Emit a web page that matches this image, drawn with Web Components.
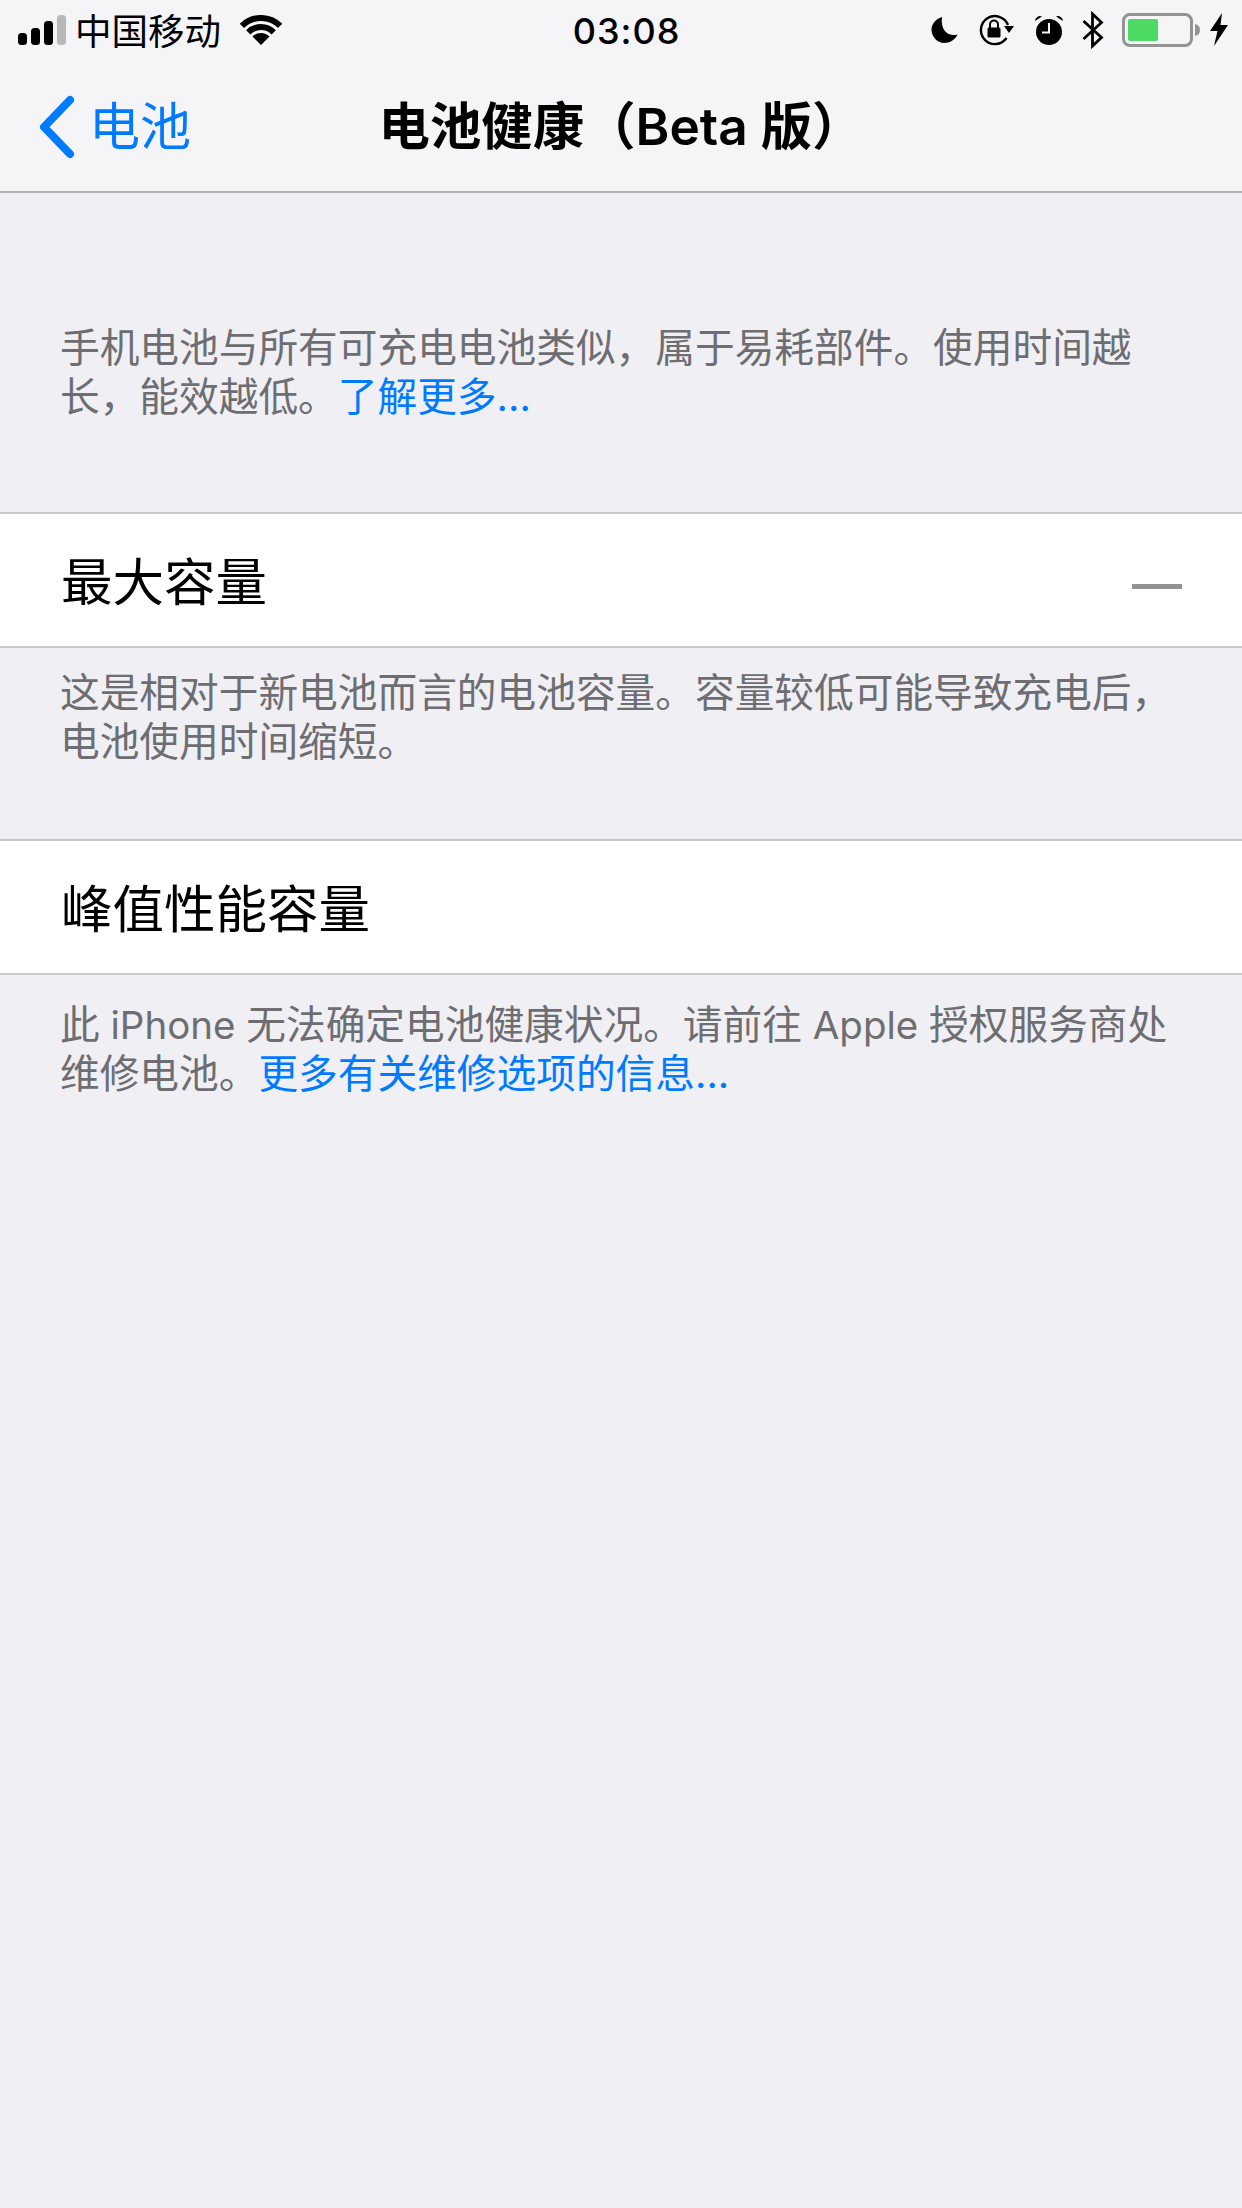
<!DOCTYPE html>
<html lang="zh">
<head>
<meta charset="utf-8">
<title>电池健康</title>
<style>
    html, body {
        margin: 0;
        padding: 0;
        background: #efeff4;
    }

    body {
        width: 1242px;
        height: 2208px;
        overflow: hidden;
        font-family: Inter, 'Noto Sans CJK SC', sans-serif;
    }
</style>
</head>
<body>
<battery-page>
    <status-bar slot="top"></status-bar>
    <nav-bar slot="top" back="电池">电池健康（Beta 版）</nav-bar>

    <group-note top="131" bottom="90">手机电池与所有可充电电池类似，属于易耗部件。使用时间越<br>长，能效越低。<a>了解更多...</a></group-note>
    <table-row dash>最大容量</table-row>
    <group-note top="21" bottom="72">这是相对于新电池而言的电池容量。容量较低可能导致充电后，<br>电池使用时间缩短。</group-note>
    <table-row>峰值性能容量</table-row>
    <group-note top="26" bottom="0">此<span> iPhone </span>无法确定电池健康状况。请前往<span> Apple </span>授权服务商处<br>维修电池。<a>更多有关维修选项的信息...</a></group-note>
</battery-page>

<script>
class BatteryPage extends HTMLElement {
    constructor() {
        super();
        this.attachShadow({ mode: 'open' }).innerHTML = `
            <style>
                :host {
                    display: flex;
                    flex-direction: column;
                    width: 1242px;
                    height: 2208px;
                    background: #efeff4;
                }

                .top {
                    display: block;
                    background: #f5f5f8;
                    border-bottom: 2px solid #b2b2b6;
                }
            </style>
            <div class="top"><slot name="top"></slot></div>
            <slot></slot>
        `;
    }
}

class StatusBar extends HTMLElement {
    constructor() {
        super();
        this.attachShadow({ mode: 'open' }).innerHTML = `
            <style>
                :host {
                    display: grid;
                    grid-template-columns: 1fr auto 1fr;
                    align-items: center;
                    height: 60px;
                    padding: 0 13px 0 18px;
                    color: #000;
                }

                .left, .right {
                    display: flex;
                    align-items: center;
                }

                .right {
                    justify-content: flex-end;
                }

                .carrier {
                    font: 400 36.5px/44px 'Noto Sans CJK SC', sans-serif;
                    margin: 0 19px 0 9px;
                }

                .time {
                    font: 500 36px/44px Inter, sans-serif;
                    letter-spacing: 1px;
                    margin-left: 6px;
                    padding-top: 2px;
                }

                svg {
                    display: block;
                }
            </style>
            <div class="left">
                <svg width="48" height="32" viewBox="0 0 48 32">
                    <rect x="0" y="19" width="9" height="12" rx="3.5"/>
                    <rect x="13" y="14" width="9" height="17" rx="3.5"/>
                    <rect x="26" y="7" width="9" height="24" rx="3.5"/>
                    <rect x="39" y="1" width="9" height="30" rx="3.5" fill="#b8b8ba"/>
                </svg>
                <span class="carrier">中国移动</span>
                <svg width="42" height="30" viewBox="0 0 42 30">
                    <path d="M1.900 10.900 A27 27 0 0 1 40.100 10.900" fill="none" stroke="#000" stroke-width="6"/>
                    <path d="M8.270 17.270 A18 18 0 0 1 33.730 17.270" fill="none" stroke="#000" stroke-width="6"/>
                    <path d="M21 30 L12.500 21.500 A12 12 0 0 1 29.500 21.500 Z"/>
                </svg>
            </div>
            <span class="time">03:08</span>
            <div class="right">
                <svg width="28" height="28" viewBox="0 0 28 28" style="margin-right:20px">
                    <path d="M12 1 C5 3 1 9 1.500 15 C2.500 22 8 27 14 27 C20 27 25 24 27.500 18.500 C19 21 10 15 12 1 Z"/>
                </svg>
                <svg width="36" height="32" viewBox="0 0 36 32" style="margin-right:20px">
                    <path d="M28.500 24 A14 14 0 1 1 30 11" fill="none" stroke="#000" stroke-width="2.400"/>
                    <path d="M26 12 L36 12 L31 19 Z"/>
                    <rect x="9.500" y="13.500" width="13" height="10" rx="1.500"/>
                    <path d="M12 14 V10.500 A4 4 0 0 1 20 10.500 V14" fill="none" stroke="#000" stroke-width="2"/>
                </svg>
                <svg width="30" height="32" viewBox="0 0 30 32" style="margin-right:18px">
                    <circle cx="15" cy="18" r="13"/>
                    <path d="M1 7 A5 5 0 0 1 8 2.500 Z M29 7 A5 5 0 0 0 22 2.500 Z"/>
                    <path d="M15 9 V18.500 H8" fill="none" stroke="#f5f5f8" stroke-width="2"/>
                </svg>
                <svg width="22" height="38" viewBox="0 0 22 38" style="margin-right:18px">
                    <path d="M1.500 10 L19.500 26.500 L10.500 35 V3 L19.500 11.500 L1.500 28" fill="none" stroke="#000" stroke-width="2.800"/>
                </svg>
                <svg width="78" height="34" viewBox="0 0 78 34" style="margin-right:10px">
                    <rect x="1.500" y="1.500" width="68" height="31" rx="6.500" fill="none" stroke="#939393" stroke-width="3"/>
                    <rect x="6" y="6" width="30" height="22" rx="2" fill="#4cd964"/>
                    <path d="M73 11 Q78 12 78 17 Q78 22 73 23 Z" fill="#939393"/>
                </svg>
                <svg width="19" height="34" viewBox="0 0 19 34">
                    <path d="M12 0 L0 18 H7.500 L4 33 L18 12 H10.500 Z"/>
                </svg>
            </div>
        `;
    }
}

class NavBar extends HTMLElement {
    constructor() {
        super();
        this.attachShadow({ mode: 'open' }).innerHTML = `
            <style>
                :host {
                    display: grid;
                    grid-template-columns: 1fr auto 1fr;
                    align-items: center;
                    height: 131px;
                    box-sizing: border-box;
                    padding-top: 2px;
                    font-family: Inter, 'Noto Sans CJK SC', sans-serif;
                }

                .back {
                    display: flex;
                    align-items: center;
                    gap: 13px;
                    padding-left: 38px;
                    color: #007aff;
                    font-size: 51px;
                    line-height: 60px;
                }

                .title {
                    color: #000;
                    font-size: 51.4px;
                    line-height: 60px;
                    font-weight: 600;
                    white-space: nowrap;
                    padding-bottom: 2px;
                }

                svg {
                    display: block;
                }
            </style>
            <span class="back">
                <svg width="38" height="64" viewBox="0 0 38 64">
                    <path d="M32 5 L6 32 L32 59" fill="none" stroke="#007aff" stroke-width="8" stroke-linecap="round" stroke-linejoin="round"/>
                </svg>
                <span id="back"></span>
            </span>
            <span class="title"><slot></slot></span>
        `;
    }

    connectedCallback() {
        this.shadowRoot.querySelector('#back').textContent = this.getAttribute('back');
    }
}

class GroupNote extends HTMLElement {
    constructor() {
        super();
        this.attachShadow({ mode: 'open' }).innerHTML = `
            <style>
                :host {
                    display: block;
                    box-sizing: border-box;
                    padding-left: 60px;
                    color: #6d6d72;
                    font: 400 39.7px/49px Inter, 'Noto Sans CJK SC', sans-serif;
                    white-space: nowrap;
                }

                ::slotted(a) {
                    color: #007aff;
                }

                /* latin runs sit narrower than the cjk text around them */
                ::slotted(span) {
                    font-size: 38.5px;
                }
            </style>
            <slot></slot>
        `;
    }

    connectedCallback() {
        this.style.paddingTop = `${this.getAttribute('top')}px`;
        this.style.paddingBottom = `${this.getAttribute('bottom')}px`;
    }
}

class TableRow extends HTMLElement {
    constructor() {
        super();
        this.attachShadow({ mode: 'open' }).innerHTML = `
            <style>
                :host {
                    display: flex;
                    align-items: center;
                    justify-content: space-between;
                    box-sizing: border-box;
                    height: 136px;
                    padding: 0 60px 0 61px;
                    background: #fff;
                    border-top: 2px solid #c8c7cc;
                    border-bottom: 2px solid #c8c7cc;
                    color: #000;
                    font: 400 51.5px/60px 'Noto Sans CJK SC', sans-serif;
                }

                .label {
                    padding-bottom: 3px;
                }

                .dash {
                    display: none;
                    width: 50px;
                    height: 5px;
                    margin-top: 12px;
                    background: #929297;
                }

                :host([dash]) .dash {
                    display: block;
                }
            </style>
            <span class="label"><slot></slot></span>
            <span class="dash"></span>
        `;
    }
}

customElements.define('battery-page', BatteryPage);
customElements.define('status-bar', StatusBar);
customElements.define('nav-bar', NavBar);
customElements.define('group-note', GroupNote);
customElements.define('table-row', TableRow);
</script>
</body>
</html>
